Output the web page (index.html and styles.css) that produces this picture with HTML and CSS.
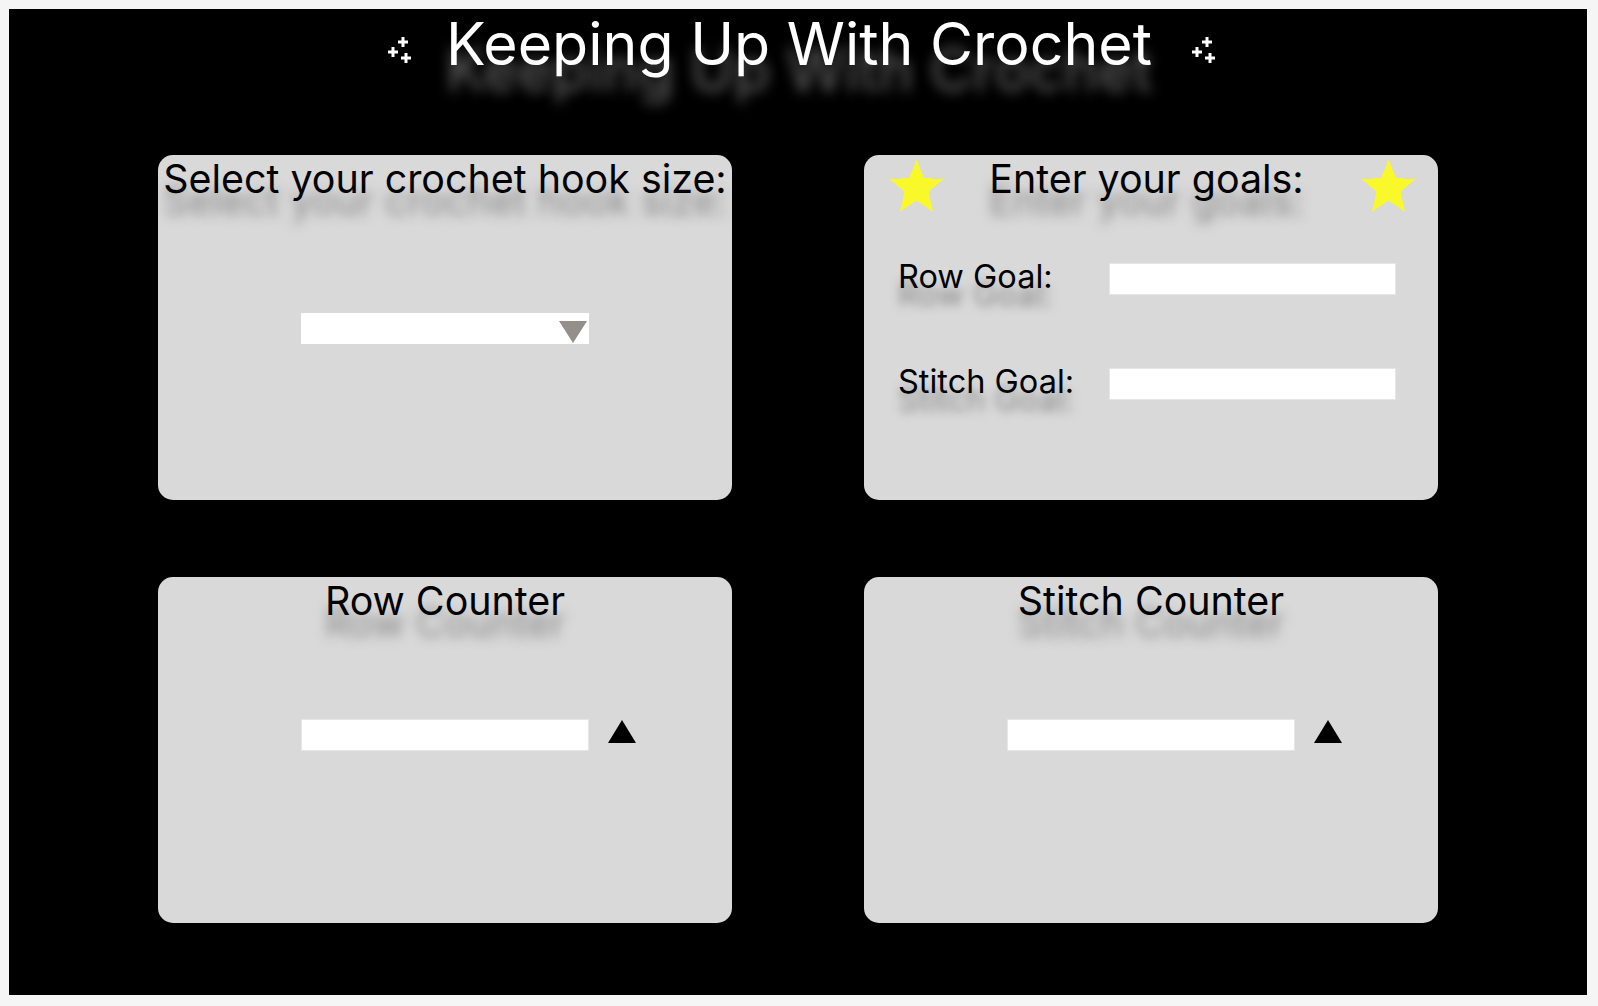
FILE: index.html
```html
<!DOCTYPE html>
<html lang="en">
<head>
<meta charset="utf-8">
<title>Keeping Up With Crochet</title>
<link rel="stylesheet" href="styles.css">
</head>
<body>
<main class="frame">
  <header class="title-row">
    <svg class="sparkle" width="26" height="28" viewBox="0 0 26 28">
      <path d="M14.5 1h3v3.5H21v3h-3.5V11h-3V7.5H11v-3h3.5zM4.5 11h3v3.5H11v3H7.5V21h-3v-3.5H1v-3h3.5zM17.5 17h3v3.5H24v3h-3.5V27h-3v-3.5H14v-3h3.5z" fill="#fff"/>
    </svg>
    <h1 class="title">Keeping Up With Crochet</h1>
    <svg class="sparkle sparkle-right" width="26" height="28" viewBox="0 0 26 28">
      <path d="M14.5 1h3v3.5H21v3h-3.5V11h-3V7.5H11v-3h3.5zM4.5 11h3v3.5H11v3H7.5V21h-3v-3.5H1v-3h3.5zM17.5 17h3v3.5H24v3h-3.5V27h-3v-3.5H14v-3h3.5z" fill="#fff"/>
    </svg>
  </header>

  <section class="grid">
    <div class="card">
      <h2 class="card-title">Select your crochet hook size:</h2>
      <div class="select-box">
        <select class="hook-select" aria-label="Hook size"></select>
        <svg class="select-arrow" width="28" height="22" viewBox="0 0 28 22"><polygon points="0,0 28,0 14,22" fill="#958f8c"/></svg>
      </div>
    </div>

    <div class="card">
      <div class="goal-head">
        <svg class="star" width="53" height="52" viewBox="0 0 53 52" shape-rendering="crispEdges"><polygon points="26.5,0 33.9,17.8 53,19.4 38.5,31.9 43,51.5 26.5,40.6 10,51.5 14.5,31.9 0,19.4 19.1,17.8" fill="#f8f82a"/></svg>
        <h2 class="card-title goal-title">Enter your goals:</h2>
        <svg class="star" width="53" height="52" viewBox="0 0 53 52" shape-rendering="crispEdges"><polygon points="26.5,0 33.9,17.8 53,19.4 38.5,31.9 43,51.5 26.5,40.6 10,51.5 14.5,31.9 0,19.4 19.1,17.8" fill="#f8f82a"/></svg>
      </div>
      <div class="goal-grid">
        <label class="goal-label" for="rowGoal">Row Goal:</label>
        <input class="field" id="rowGoal" type="text">
        <label class="goal-label" for="stitchGoal">Stitch Goal:</label>
        <input class="field" id="stitchGoal" type="text">
      </div>
    </div>

    <div class="card">
      <h2 class="card-title">Row Counter</h2>
      <div class="counter-row">
        <input class="field" type="text" aria-label="Row count">
        <svg class="up" width="28" height="23" viewBox="0 0 28 23"><polygon points="14,0 28,23 0,23" fill="#000"/></svg>
      </div>
    </div>

    <div class="card">
      <h2 class="card-title">Stitch Counter</h2>
      <div class="counter-row">
        <input class="field" type="text" aria-label="Stitch count">
        <svg class="up" width="28" height="23" viewBox="0 0 28 23"><polygon points="14,0 28,23 0,23" fill="#000"/></svg>
      </div>
    </div>
  </section>
</main>
</body>
</html>
```
FILE: styles.css
```css
html, body {
  margin: 0;
  padding: 0;
  background: #f5f5f5;
}

body {
  font-family: Inter, "Liberation Sans", sans-serif;
}

.frame {
  box-sizing: border-box;
  width: 1578px;
  height: 986px;
  margin: 9px;
  background: #000;
  padding: 0 149px;
}

.title-row {
  display: flex;
  justify-content: center;
  align-items: flex-start;
  gap: 33px;
  height: 146px;
  padding-left: 8px;
}

.sparkle {
  margin-top: 27px;
  flex: none;
}

.sparkle-right {
  margin-left: 6px;
}

.title {
  margin: 0;
  font-weight: 400;
  font-size: 59px;
  line-height: 70px;
  color: #fff;
  text-shadow: 0 26px 13px rgba(140, 140, 140, 0.75);
}

.grid {
  display: grid;
  grid-template-columns: 574px 574px;
  grid-template-rows: 345px 346px;
  column-gap: 132px;
  row-gap: 77px;
}

.card {
  background: #d9d9d9;
  border-radius: 15px;
  display: flex;
  flex-direction: column;
}

.card-title {
  margin: 0;
  padding-top: 2px;
  font-weight: 400;
  font-size: 39.4px;
  line-height: 45px;
  text-align: center;
  color: #000;
  white-space: nowrap;
  text-shadow: 0 22px 12px rgba(110, 110, 110, 0.75);
}

.goal-title {
  margin-right: 12px;
}

.select-box {
  align-self: center;
  width: 288px;
  height: 31px;
  margin-top: 111px;
  background: #fff;
  display: flex;
  align-items: flex-start;
}

.hook-select {
  flex: 1;
  height: 31px;
  border: 0;
  background: transparent;
  appearance: none;
  -webkit-appearance: none;
  outline: none;
}

.select-arrow {
  margin: 8px 2px 0 0;
  flex: none;
}

.goal-head {
  display: flex;
  justify-content: space-between;
  align-items: flex-start;
  padding: 0 23px 0 26px;
  height: 57px;
}

.star {
  margin-top: 5px;
  flex: none;
}

.goal-grid {
  display: grid;
  grid-template-columns: 211px 287px;
  align-items: end;
  row-gap: 69px;
  padding-left: 34px;
  margin-top: 47px;
}

.goal-label {
  font-size: 32.5px;
  line-height: 36px;
  color: #000;
  white-space: nowrap;
  text-shadow: 0 18px 10px rgba(110, 110, 110, 0.75);
}

.field {
  box-sizing: border-box;
  height: 32px;
  width: 287px;
  margin: 0;
  padding: 0 6px;
  border: 1px solid #e6e6e6;
  background: #fff;
  font: inherit;
  font-size: 18px;
  outline: none;
}

.counter-row {
  display: grid;
  grid-template-columns: 1fr 288px 1fr;
  align-items: start;
  margin-top: 95px;
}

.counter-row .field {
  grid-column: 2;
  width: 288px;
}

.up {
  grid-column: 3;
  margin: 1px 0 0 19px;
}
```
